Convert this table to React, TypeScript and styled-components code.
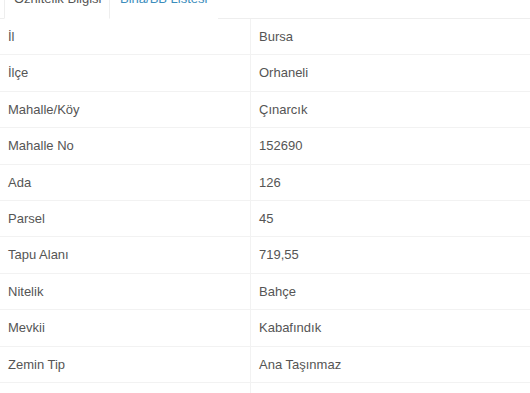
import styled, { createGlobalStyle } from 'styled-components';

const GlobalStyle = createGlobalStyle`
    html, body {
        margin: 0;
        padding: 0;
        background: #fff;
        overflow: hidden;
    }
    body {
        font-family: "Liberation Sans", Arial, sans-serif;
        font-size: 13px;
        color: #555;
    }
`;

const rows: [string, string][] = [
    ['İl', 'Bursa'],
    ['İlçe', 'Orhaneli'],
    ['Mahalle/Köy', 'Çınarcık'],
    ['Mahalle No', '152690'],
    ['Ada', '126'],
    ['Parsel', '45'],
    ['Tapu Alanı', '719,55'],
    ['Nitelik', 'Bahçe'],
    ['Mevkii', 'Kabafındık'],
    ['Zemin Tip', 'Ana Taşınmaz'],
    ['', ''],
];

const Panel = styled.div`
    width: 530px;
    height: 393px;
    overflow: hidden;
`;

const Tabs = styled.ul`
    display: flex;
    list-style: none;
    margin: -21px 0 0;
    padding: 0 0 0 4px;
    border-bottom: 1px solid #eee;
`;

const Tab = styled.li<{ $active?: boolean }>`
    margin-bottom: -1px;
    padding: 10px 10px 10px 9px;
    line-height: 18px;
    color: ${p => (p.$active ? '#555' : '#3c8dbc')};
    background: #fff;
    border: 1px solid ${p => (p.$active ? '#eee' : 'transparent')};
    border-bottom-color: ${p => (p.$active ? '#fff' : 'transparent')};
    width: ${p => (p.$active ? '85px' : 'auto')};
    white-space: nowrap;
`;

const Table = styled.table`
    width: 100%;
    border-collapse: collapse;
    table-layout: fixed;
`;

const Cell = styled.td<{ $label?: boolean }>`
    width: ${p => (p.$label ? '234px' : 'auto')};
    padding: 8px;
    line-height: 19.4px;
    height: 19.4px;
    border-top: 1px solid #f2f2f2;
    border-right: ${p => (p.$label ? '1px solid #f2f2f2' : 'none')};
    vertical-align: middle;
    white-space: nowrap;
`;

const FirstRow = styled.tr`
    td {
        border-top: none;
    }
`;

export default function App() {
    return (
        <Panel>
            <GlobalStyle />
            <Tabs>
                <Tab $active>Öznitelik Bilgisi</Tab>
                <Tab>Bina/BB Listesi</Tab>
            </Tabs>
            <Table>
                <tbody>
                    {rows.map(([label, value], i) => {
                        const Row = i === 0 ? FirstRow : 'tr';
                        return (
                            <Row key={i}>
                                <Cell $label>{label}</Cell>
                                <Cell>{value}</Cell>
                            </Row>
                        );
                    })}
                </tbody>
            </Table>
        </Panel>
    );
}
